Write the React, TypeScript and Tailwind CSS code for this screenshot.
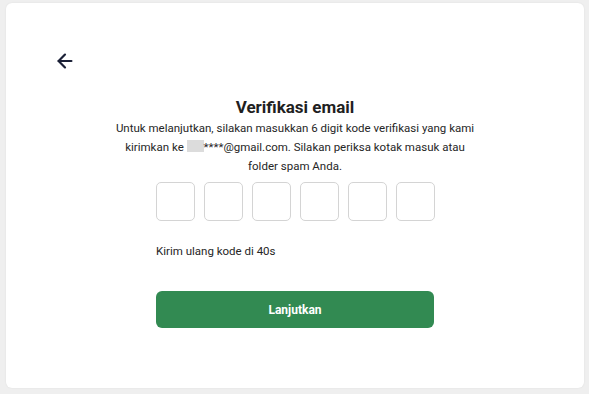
import { ArrowLeft } from 'lucide-react'

export default function App() {
  return (
    <div className="w-[589px] h-[394px] bg-[#efefef] pt-[3px] pl-[6px] pr-[5px] pb-[6px]" style={{ fontFamily: 'Roboto, "Noto Sans", sans-serif' }}>
      <div className="h-full bg-white rounded-[6px] shadow-[0_0_2px_rgba(0,0,0,0.08)] flex flex-col">
        <div className="pl-[48px] pt-[47px] h-[78px]">
          <ArrowLeft size={22} strokeWidth={2.4} className="text-[#1b2037]" />
        </div>
        <div className="flex flex-col items-center">
          <h1 className="text-[17px] font-bold text-[#1f1f1f] leading-[22px] mt-[15px]">Verifikasi email</h1>
          <p className="text-[11.5px] text-[#262626] leading-[19px] text-center w-[364px] mt-[1px]">
            Untuk melanjutkan, silakan masukkan 6 digit kode verifikasi yang kami kirimkan ke{' '}
            <span className="inline-block w-[17px] h-[12px] bg-[#dcdcdc] align-[-1px]"></span>****@gmail.com. Silakan periksa kotak masuk atau folder spam Anda.
          </p>
          <div className="flex gap-[9px] mt-[6px]">
            {[0, 1, 2, 3, 4, 5].map(i => (
              <div key={i} className="w-[39px] h-[39px] border border-[#d4d4d4] rounded-[5px]" />
            ))}
          </div>
          <div className="w-[278px] mt-[22px]">
            <p className="text-[11.5px] text-[#262626] leading-[16px]">Kirim ulang kode di 40s</p>
          </div>
          <button className="w-[278px] h-[37px] mt-[32px] rounded-[6px] bg-[#328a52] text-white text-[12px] font-bold">
            Lanjutkan
          </button>
        </div>
      </div>
    </div>
  )
}
